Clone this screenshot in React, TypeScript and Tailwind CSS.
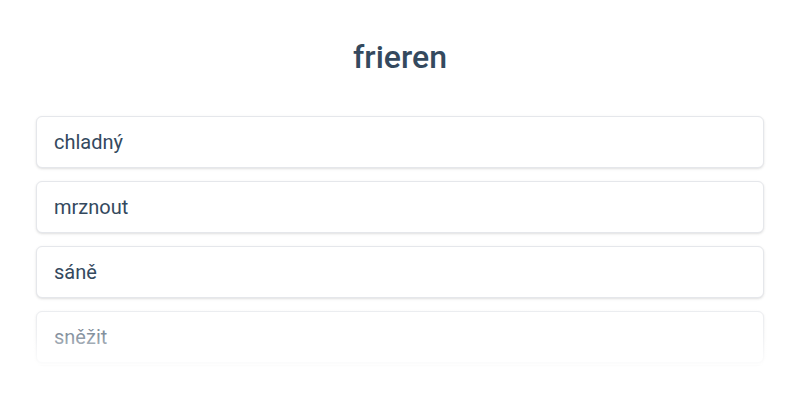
const words = ['chladný', 'mrznout', 'sáně', 'sněžit']

export default function App() {
  return (
    <div className="min-h-[400px] w-full bg-white font-['Roboto',sans-serif] text-[#34495e]">
      <h1 className="pt-[37px] text-center text-[32px] font-medium leading-[40px]">frieren</h1>

      <div className="relative mt-[39px] px-[36px]">
        <ul className="flex flex-col gap-[13px]">
          {words.map(w => (
            <li
              key={w}
              className="flex h-[52px] items-center rounded-md border border-gray-200 bg-white px-[17px] text-[20px] shadow-sm"
            >
              {w}
            </li>
          ))}
        </ul>
        {/* fade over the last item */}
        <div className="pointer-events-none absolute inset-x-0 -bottom-[2px] h-[60px] bg-gradient-to-b from-white/20 via-white/40 to-white/90" />
      </div>
    </div>
  )
}
